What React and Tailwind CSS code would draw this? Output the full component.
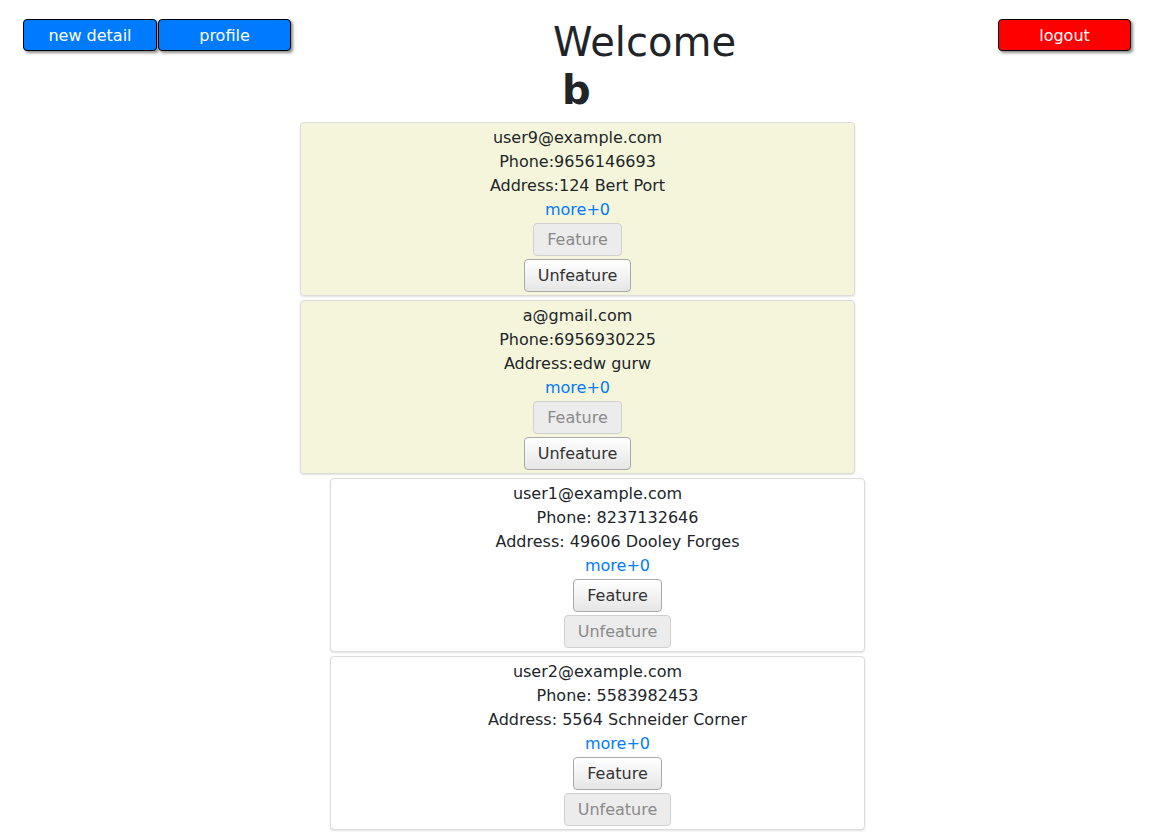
const cards = [
  { email: 'user9@example.com', phone: 'Phone:9656146693', address: 'Address:124 Bert Port', featured: true },
  { email: 'a@gmail.com', phone: 'Phone:6956930225', address: 'Address:edw gurw', featured: true },
  { email: 'user1@example.com', phone: 'Phone: 8237132646', address: 'Address: 49606 Dooley Forges', featured: false },
  { email: 'user2@example.com', phone: 'Phone: 5583982453', address: 'Address: 5564 Schneider Corner', featured: false },
];

function TopButton({ label, color, width }) {
  return (
    <button
      className={`h-[32px] rounded-[4px] border border-black pt-[2px] text-base text-white shadow-[2px_2px_3px_rgba(0,0,0,0.45)] ${color} ${width}`}
    >
      {label}
    </button>
  );
}

function SmallButton({ label, disabled }) {
  return disabled ? (
    <button className="h-[33px] rounded-[4px] border border-[#d0d0d0] bg-[#ececec] px-[13px] text-base text-[#8a8a8a]">
      {label}
    </button>
  ) : (
    <button className="h-[33px] rounded-[4px] border border-[#a9a9a9] bg-gradient-to-b from-white to-[#e6e6e6] px-[13px] text-base text-[#333]">
      {label}
    </button>
  );
}

function DetailCard({ card }) {
  const shifted = !card.featured;
  return (
    <div
      className={`flex flex-col rounded-[4px] border border-[#dcdcdc] pt-[3px] pb-[3px] text-center shadow-[0_1px_2px_rgba(0,0,0,0.12)] ${
        card.featured ? 'ml-[300px] w-[555px] bg-[#f5f5dc]' : 'ml-[330px] w-[535px] bg-white'
      }`}
    >
      <p className="leading-6">{card.email}</p>
      <div className={`flex flex-col items-center ${shifted ? 'pl-10' : ''}`}>
        <p className="leading-6">{card.phone}</p>
        <p className="leading-6">{card.address}</p>
        <a className="leading-6 text-[#007bff]">more+0</a>
        <div className="mt-[1px] flex flex-col items-center gap-[3px]">
          <SmallButton label="Feature" disabled={card.featured} />
          <SmallButton label="Unfeature" disabled={!card.featured} />
        </div>
      </div>
    </div>
  );
}

export default function App() {
  return (
    <div className="min-h-screen bg-white font-['DejaVu_Sans',sans-serif] text-base text-[#212529]">
      <header className="flex items-start justify-between pl-[23px] pr-[39px]">
        <div className="mt-[19px] flex gap-[1px]">
          <TopButton label="new detail" color="bg-[#007bff]" width="w-[134px]" />
          <TopButton label="profile" color="bg-[#007bff]" width="w-[133px]" />
        </div>
        <div className="mt-[18px]">
          <h1 className="text-[40px] leading-[48px]">Welcome</h1>
          <h1 className="ml-[9px] text-[40px] font-bold leading-[48px]">b</h1>
        </div>
        <div className="mt-[19px]">
          <TopButton label="logout" color="bg-[#ff0000]" width="w-[133px]" />
        </div>
      </header>
      <main className="mt-[8px] flex flex-col gap-[4px] pb-4">
        {cards.map((card) => (
          <DetailCard key={card.email} card={card} />
        ))}
      </main>
    </div>
  );
}
